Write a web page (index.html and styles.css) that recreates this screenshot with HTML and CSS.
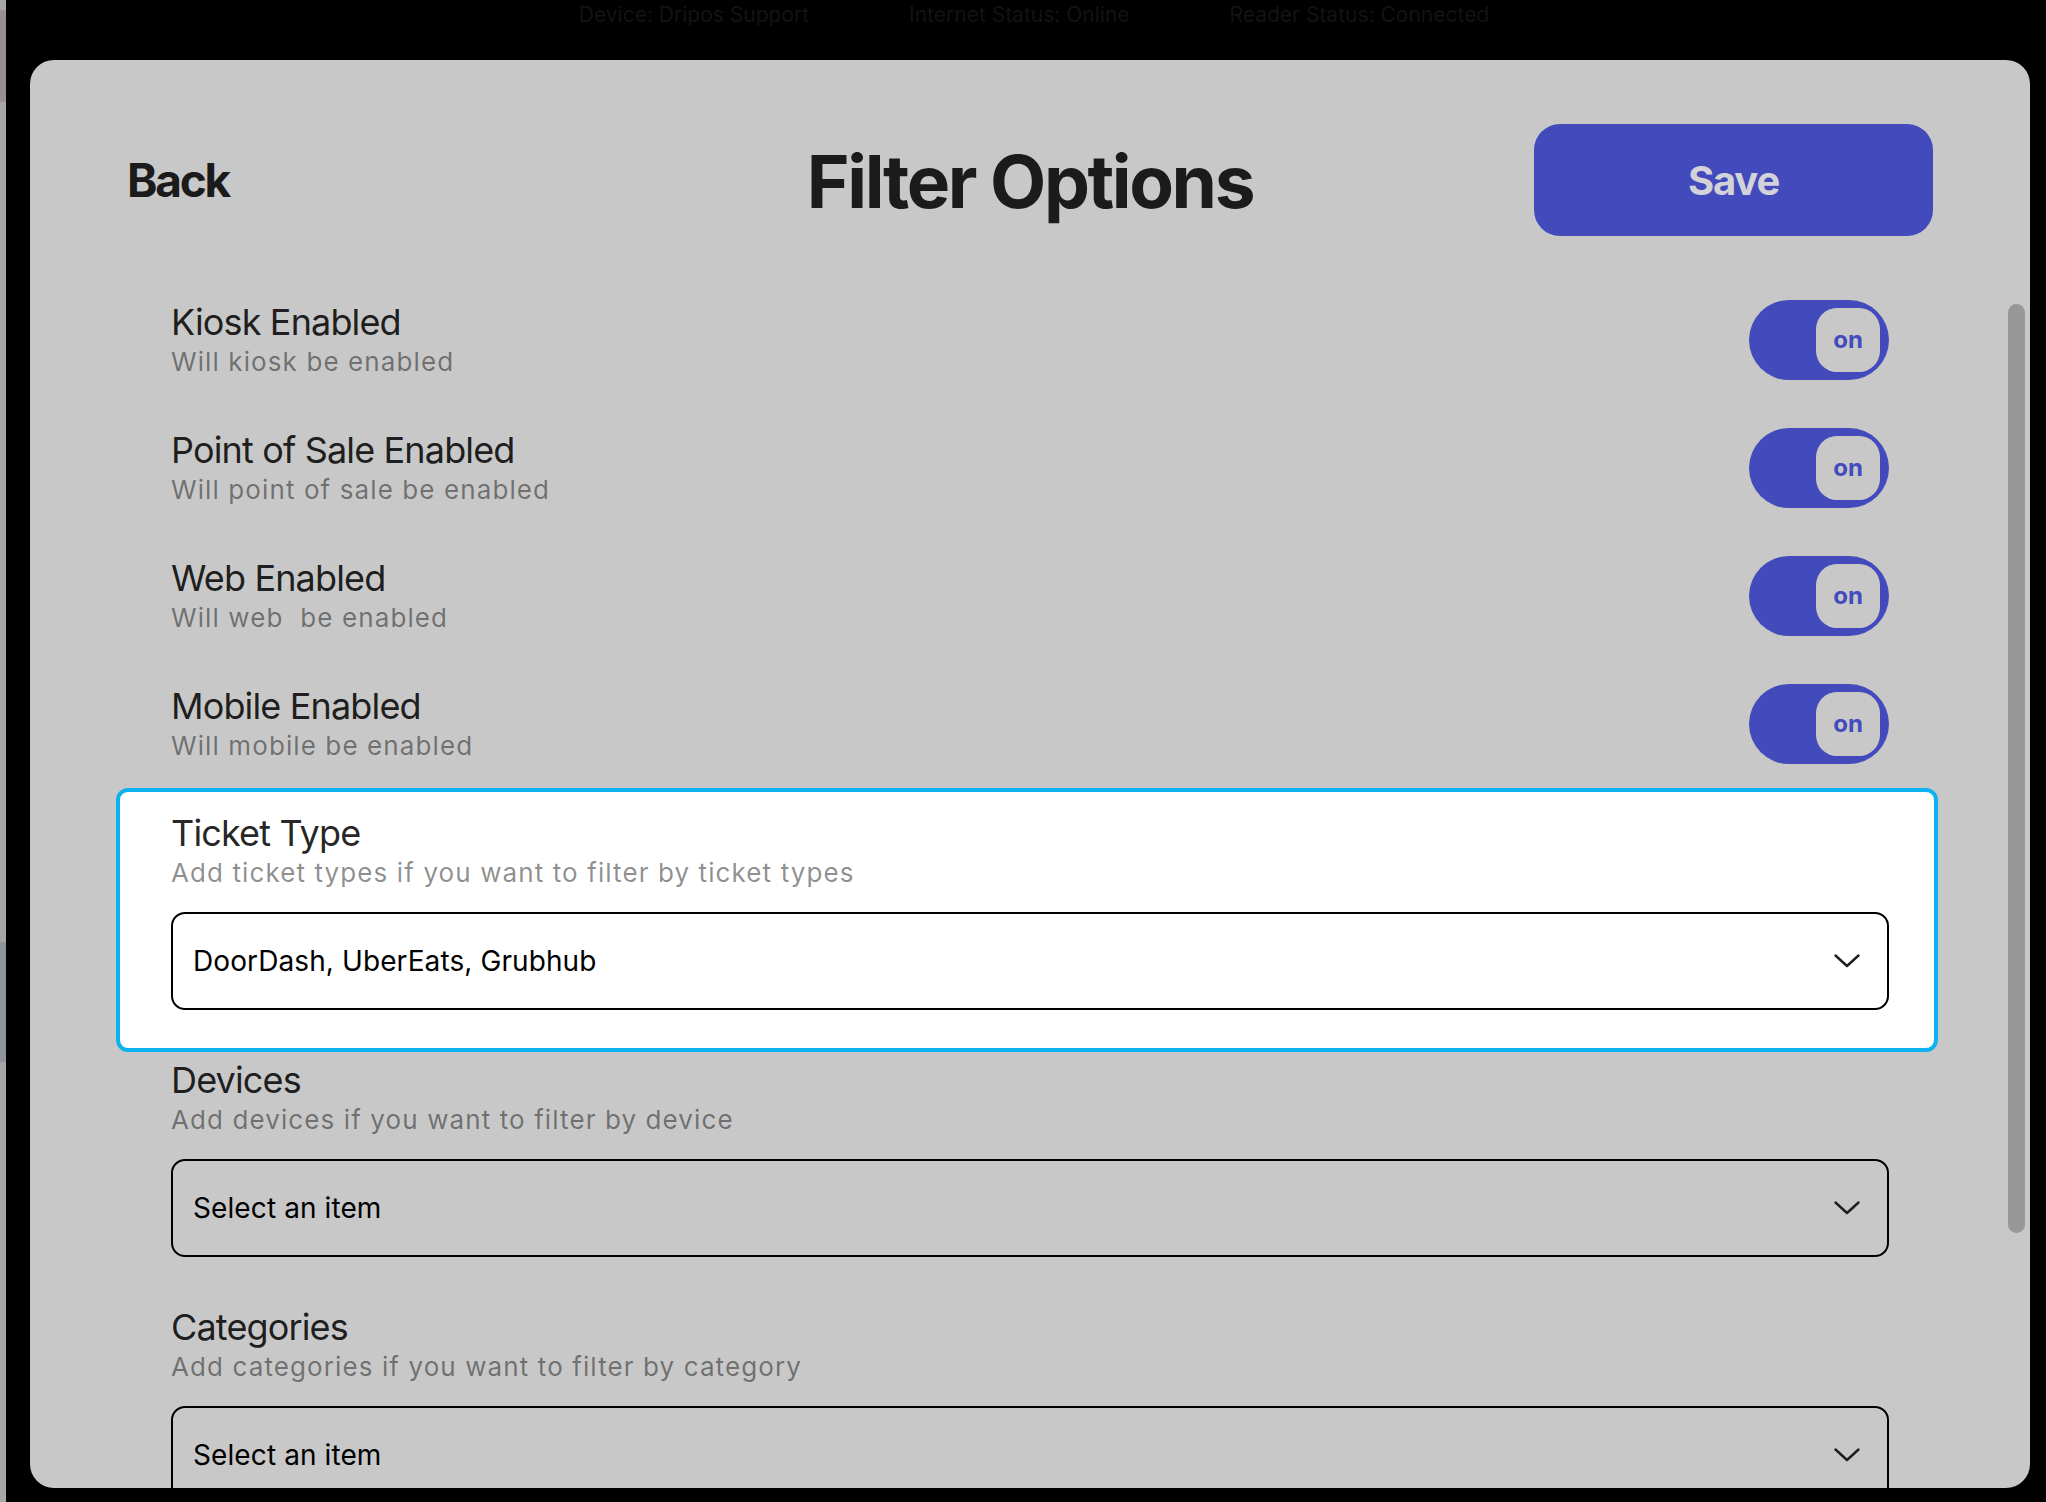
FILE: index.html
```html
<!DOCTYPE html>
<html lang="en">
<head>
<meta charset="utf-8">
<title>Filter Options</title>
<link rel="stylesheet" href="styles.css">
</head>
<body>
<div class="screen">
  <div class="peek">
    <div class="peek-top"></div>
    <div class="peek-mid"></div>
  </div>
  <div class="stage">
    <div class="statusbar">
      <span>Device: Dripos Support</span>
      <span>Internet Status: Online</span>
      <span>Reader Status: Connected</span>
    </div>
    <div class="modal">
      <header class="modal-header">
        <div class="back">Back</div>
        <h1 class="title">Filter Options</h1>
        <button class="save">Save</button>
      </header>
      <div class="content">
        <div class="row">
          <div class="label">
            <div class="label-title">Kiosk Enabled</div>
            <div class="label-sub">Will kiosk be enabled</div>
          </div>
          <div class="toggle"><div class="knob">on</div></div>
        </div>
        <div class="row">
          <div class="label">
            <div class="label-title">Point of Sale Enabled</div>
            <div class="label-sub">Will point of sale be enabled</div>
          </div>
          <div class="toggle"><div class="knob">on</div></div>
        </div>
        <div class="row">
          <div class="label">
            <div class="label-title">Web Enabled</div>
            <div class="label-sub">Will web&nbsp; be enabled</div>
          </div>
          <div class="toggle"><div class="knob">on</div></div>
        </div>
        <div class="row">
          <div class="label">
            <div class="label-title">Mobile Enabled</div>
            <div class="label-sub">Will mobile be enabled</div>
          </div>
          <div class="toggle"><div class="knob">on</div></div>
        </div>
        <div class="field field-focused">
          <div class="label-title">Ticket Type</div>
          <div class="label-sub">Add ticket types if you want to filter by ticket types</div>
          <div class="select">
            <span class="select-value">DoorDash, UberEats, Grubhub</span>
            <svg class="chev" width="26" height="14" viewBox="0 0 26 14"><polyline points="1.5,1.5 13,12 24.5,1.5" fill="none" stroke="#1e1e1e" stroke-width="2.4" stroke-linecap="round" stroke-linejoin="round"/></svg>
          </div>
        </div>
        <div class="field">
          <div class="label-title">Devices</div>
          <div class="label-sub">Add devices if you want to filter by device</div>
          <div class="select">
            <span class="select-value">Select an item</span>
            <svg class="chev" width="26" height="14" viewBox="0 0 26 14"><polyline points="1.5,1.5 13,12 24.5,1.5" fill="none" stroke="#1e1e1e" stroke-width="2.4" stroke-linecap="round" stroke-linejoin="round"/></svg>
          </div>
        </div>
        <div class="field">
          <div class="label-title">Categories</div>
          <div class="label-sub">Add categories if you want to filter by category</div>
          <div class="select">
            <span class="select-value">Select an item</span>
            <svg class="chev" width="26" height="14" viewBox="0 0 26 14"><polyline points="1.5,1.5 13,12 24.5,1.5" fill="none" stroke="#1e1e1e" stroke-width="2.4" stroke-linecap="round" stroke-linejoin="round"/></svg>
          </div>
        </div>
      </div>
      <div class="scroll-thumb"></div>
    </div>
  </div>
</div>
</body>
</html>
```

FILE: styles.css
```css
* { box-sizing: border-box; }

html, body {
  margin: 0;
  padding: 0;
  background: #000;
  font-family: Inter, "Noto Sans", "Liberation Sans", sans-serif;
}

.screen {
  width: 2046px;
  height: 1502px;
  display: flex;
  overflow: hidden;
}

.peek {
  width: 6px;
  background: #a6a6a6;
  display: flex;
  flex-direction: column;
}
.peek-top {
  height: 92px;
  margin-top: 10px;
  background: #978f90;
}
.peek-mid {
  height: 120px;
  margin-top: 840px;
  background: #8e939c;
}

.stage {
  flex: 1;
  background: #000;
  display: flex;
  flex-direction: column;
  padding: 0 16px 14px 24px;
}

.statusbar {
  height: 60px;
  display: flex;
  justify-content: center;
  gap: 100px;
  color: #131313;
  font-size: 21px;
  line-height: 27px;
  padding-top: 1px;
  padding-left: 8px;
}
.statusbar span { display: block; }

.modal {
  position: relative;
  width: 2000px;
  height: 1428px;
  background: #c8c8c8;
  border-radius: 24px;
  overflow: hidden;
  display: flex;
  flex-direction: column;
}

.modal-header {
  display: grid;
  grid-template-columns: 1fr auto 1fr;
  align-items: center;
  padding: 64px 97px 0 97px;
}

.back {
  font-size: 46px;
  font-weight: 700;
  color: #1b1b1b;
  letter-spacing: -2.2px;
}

.title {
  margin: 0;
  font-size: 73px;
  font-weight: 700;
  color: #1b1b1b;
  letter-spacing: -2.4px;
  padding-top: 2px;
}

.save {
  justify-self: end;
  width: 399px;
  height: 112px;
  border: 0;
  border-radius: 26px;
  background: #434bbc;
  color: #d2d2d8;
  font-family: inherit;
  font-size: 40px;
  font-weight: 700;
  letter-spacing: -1.2px;
}

.content {
  display: flex;
  flex-direction: column;
  gap: 48px;
  padding: 64px 141px 0 141px;
}

.row {
  display: flex;
  justify-content: space-between;
  align-items: center;
  height: 80px;
}

.label-title {
  font-size: 36px;
  line-height: 44px;
  color: rgba(0, 0, 0, 0.87);
  letter-spacing: -0.85px;
}

.label-sub {
  font-size: 26px;
  line-height: 36px;
  color: rgba(0, 0, 0, 0.45);
  letter-spacing: 1.1px;
}

.toggle {
  width: 140px;
  height: 80px;
  border-radius: 40px;
  background: #434bbc;
  display: flex;
  justify-content: flex-end;
  align-items: center;
  padding-right: 9px;
}

.knob {
  width: 64px;
  height: 64px;
  border-radius: 21px;
  background: #c8c8c8;
  color: #434bbc;
  font-size: 24px;
  font-weight: 700;
  display: flex;
  align-items: center;
  justify-content: center;
  padding-bottom: 2px;
}

.field {
  display: flex;
  flex-direction: column;
}

.field-focused {
  background: #fff;
  border: 4px solid #0bb2ef;
  border-radius: 12px;
  margin: -24px -49px -42px -55px;
  padding: 19px 45px 38px 51px;
}

.select {
  margin-top: 21px;
  height: 98px;
  border: 2px solid #000;
  border-radius: 14px;
  display: flex;
  align-items: center;
  justify-content: space-between;
  padding: 0 27px 0 20px;
}

.select-value {
  font-size: 28px;
  color: #000;
  letter-spacing: 0.1px;
}

.chev { display: block; }

.scroll-thumb {
  position: absolute;
  top: 244px;
  right: 5px;
  width: 17px;
  height: 929px;
  border-radius: 9px;
  background: #979797;
}
```
